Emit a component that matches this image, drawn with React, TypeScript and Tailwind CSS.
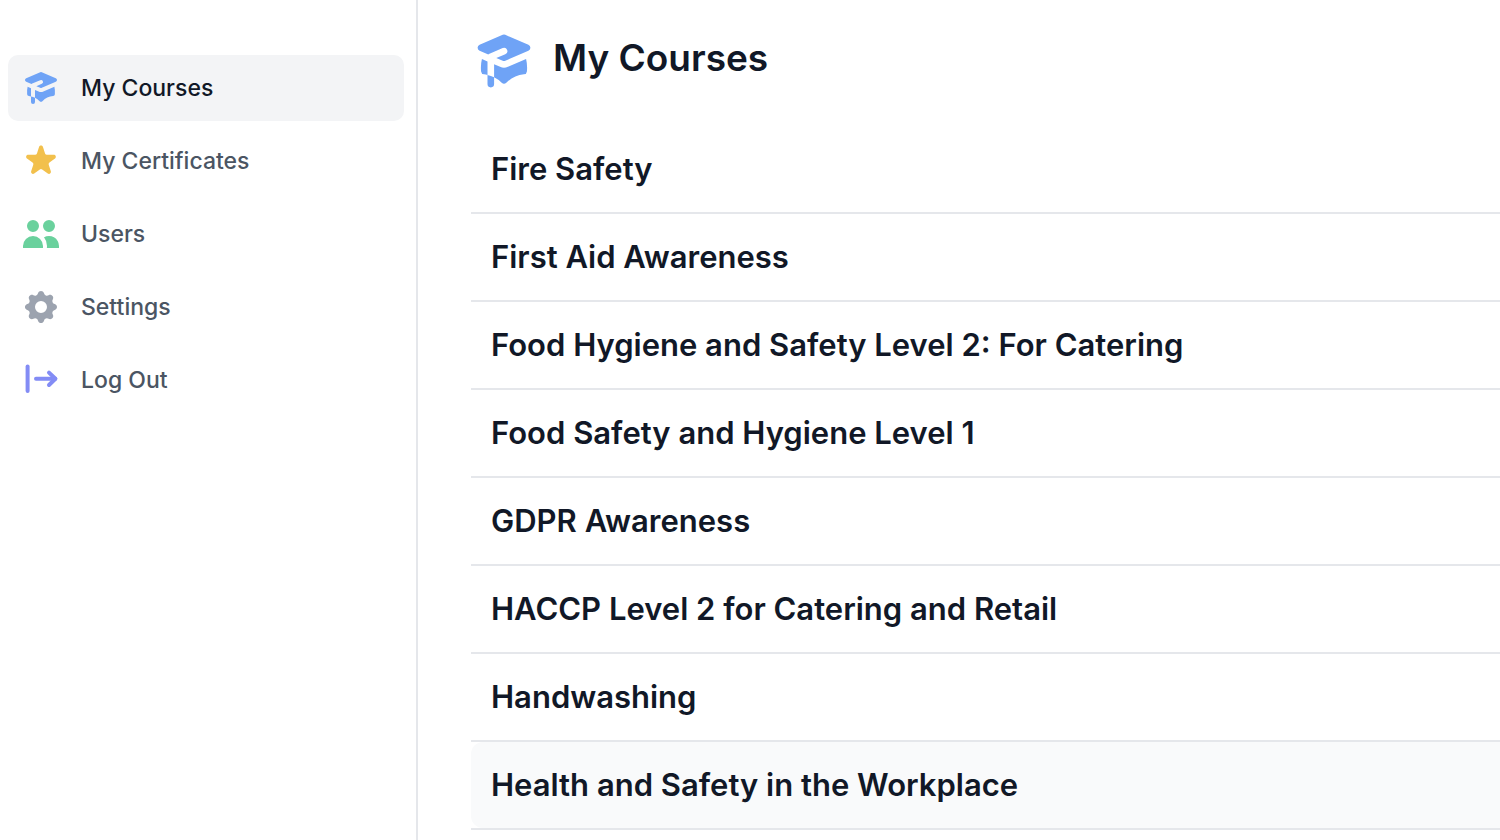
import { useState } from 'react';
import clsx from 'clsx';
import { HiAcademicCap, HiCog, HiStar, HiUsers } from 'react-icons/hi';

function LogOutIcon({ className }: { className?: string }) {
  return (
    <svg viewBox="0 0 40 40" fill="none" stroke="currentColor" strokeWidth="4" strokeLinecap="round" strokeLinejoin="round" className={className} aria-hidden="true">
      <path d="M6.6 6.6v24.4" />
      <path d="M15 18.8h19.2" />
      <path d="M28 12.6l6.4 6.2-6.4 6.2" />
    </svg>
  );
}

const navItems = [
  { label: 'My Courses', icon: HiAcademicCap, color: 'text-[#6fa3f6]' },
  { label: 'My Certificates', icon: HiStar, color: 'text-[#f2c04c]' },
  { label: 'Users', icon: HiUsers, color: 'text-[#6ad19d]' },
  { label: 'Settings', icon: HiCog, color: 'text-[#9ca3af]' },
  { label: 'Log Out', icon: LogOutIcon, color: 'text-[#838cf5]' },
];

const courses = [
  'Fire Safety',
  'First Aid Awareness',
  'Food Hygiene and Safety Level 2: For Catering',
  'Food Safety and Hygiene Level 1',
  'GDPR Awareness',
  'HACCP Level 2 for Catering and Retail',
  'Handwashing',
  'Health and Safety in the Workplace',
];

function Sidebar() {
  return (
    <aside className="w-[418px] shrink-0 border-r-2 border-[#e5e7eb] pt-[55px] pr-3 pl-2">
      <nav className="flex flex-col gap-[7px]">
        {navItems.map(({ label, icon: Icon, color }, index) => (
          <a
            key={label}
            href="#"
            aria-current={index === 0 ? 'page' : undefined}
            className={clsx(
              'flex items-center gap-5 rounded-[10px] px-[13px] py-[13px] text-[23px] leading-[40px] font-medium',
              index === 0 ? 'bg-[#f3f4f6] text-[#111827]' : 'text-[#4b5563]'
            )}
          >
            <Icon className={clsx('size-10 shrink-0', color)} />
            {label}
          </a>
        ))}
      </nav>
    </aside>
  );
}

export default function App() {
  const [active, setActive] = useState('Health and Safety in the Workplace');

  return (
    <div className="flex min-h-screen bg-white font-['Inter','Liberation_Sans',sans-serif] text-[#111827]">
      <Sidebar />

      <main className="min-w-0 flex-1 pt-7 pl-[53px]">
        <header className="flex items-start gap-4">
          <HiAcademicCap className="size-[66px] shrink-0 text-[#6fa3f6]" />
          <h1 className="text-[37px] leading-[60px] font-semibold">My Courses</h1>
        </header>

        <ul className="pt-8">
          {courses.map((course) => (
            <li key={course} className="border-b-2 border-[#e5e7eb]">
              <a
                href="#"
                onMouseEnter={() => setActive(course)}
                className={clsx(
                  'block rounded-l-xl px-5 py-[23px] text-[31px] leading-[40px] font-semibold',
                  active === course && 'bg-[#f9fafb]'
                )}
              >
                {course}
              </a>
            </li>
          ))}
        </ul>
      </main>
    </div>
  );
}
